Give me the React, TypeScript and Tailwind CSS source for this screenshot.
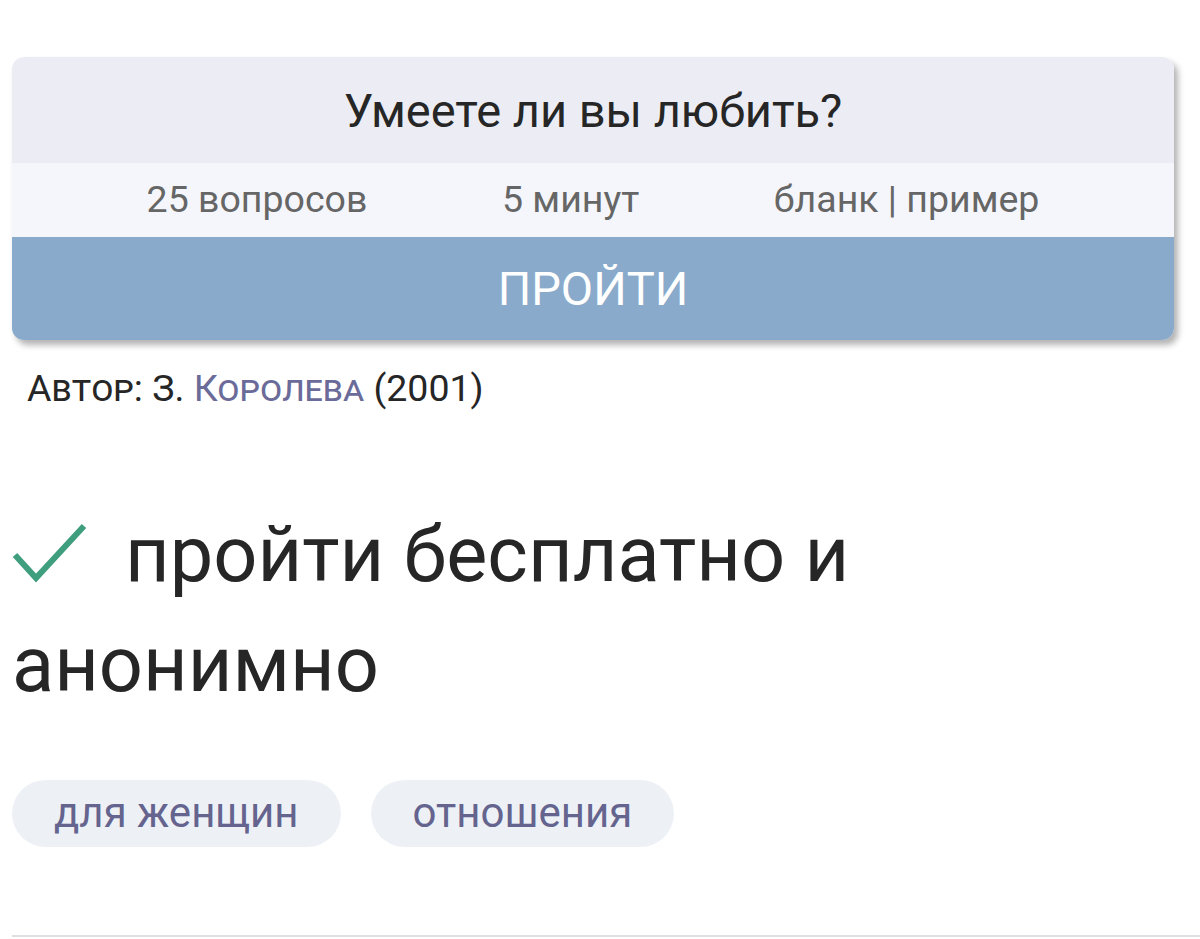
export default function App() {
  const stats = ['25 вопросов', '5 минут', 'бланк | пример'];
  const tags = ['для женщин', 'отношения'];

  return (
    <div className="min-h-[939px] bg-white font-['Roboto',sans-serif] text-[#262626]">
      <div className="pl-3 pr-[26px] pt-[57px]">
        <div className="overflow-hidden rounded-[12px] shadow-[4px_5px_6px_rgba(0,0,0,0.3)]">
          <div className="flex h-[106px] items-center justify-center bg-[#ECEDF4] text-[47px] leading-none text-[#262626]">
            Умеете ли вы любить?
          </div>
          <div className="flex h-[74px] items-center justify-evenly bg-[#F5F6FB] text-[37.5px] leading-none text-[#666666]">
            {stats.map(s => (
              <span key={s}>{s}</span>
            ))}
          </div>
          <div className="flex h-[103px] items-center justify-center bg-[#8AAACB] text-[47px] leading-none text-white">
            ПРОЙТИ
          </div>
        </div>
      </div>

      <div className="px-3">
        <p className="mt-[30px] pl-[15px] text-[37.5px] leading-none text-[#262626] [font-variant-caps:small-caps]">
          Автор: З. <span className="text-[#6B6B99]">Королева</span> (2001)
        </p>

        <p className="mt-[92px] pr-[20px] text-[77.5px] leading-[110px] text-[#262626]">
          <svg
            width="76"
            height="62"
            viewBox="0 0 76 62"
            className="mr-[37px] inline-block align-[-3px]"
          >
            <path d="M3 33L24 56L72 4" fill="none" stroke="#3F9E7E" strokeWidth="6" />
          </svg>
          пройти бесплатно и анонимно
        </p>

        <div className="mt-[60px] flex gap-[30px]">
          {tags.map(t => (
            <span
              key={t}
              className="flex h-[67px] items-center rounded-full bg-[#EDF1F6] px-[42px] text-[42px] leading-none text-[#64648F]"
            >
              {t}
            </span>
          ))}
        </div>
      </div>
      <div className="ml-3 mt-[88px] h-[2px] bg-[#DEDFE3]" />
    </div>
  );
}
